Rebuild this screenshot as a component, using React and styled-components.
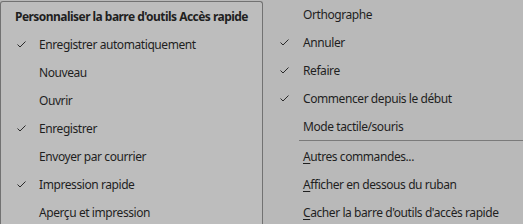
import React from "react";
import styled, { createGlobalStyle } from "styled-components";

const Global = createGlobalStyle`
  html, body { margin: 0; padding: 0; background: #b9b9b9; }
  body { font-family: "Noto Sans", "Liberation Sans", sans-serif; }
`;

const Screen = styled.div`
  width: 523px;
  height: 224px;
  overflow: hidden;
  display: grid;
  grid-template-columns: 263px 1fr;
  background: #b9b9b9;
  color: #1f1f1f;
  font-size: 12px;
`;

const Panel = styled.div`
  margin-top: 1px;
  height: 240px;
  box-sizing: border-box;
  background: #bdbdbd;
  border: 1px solid #727272;
  border-bottom: none;
  border-radius: 3px 3px 0 0;
  display: flex;
  flex-direction: column;
`;

const Header = styled.div`
  height: 28px;
  display: flex;
  align-items: center;
  padding-left: 14px;
  font-weight: 700;
  letter-spacing: -0.54px;
  white-space: nowrap;
`;

const Column = styled.div`
  display: flex;
  flex-direction: column;
`;

const Row = styled.div`
  height: 28px;
  display: flex;
  align-items: center;
  padding-left: ${(p) => p.$indent}px;
  white-space: nowrap;
`;

const Check = styled.span`
  width: ${(p) => p.$w}px;
  flex: none;
  display: flex;
  align-items: center;
`;

const Label = styled.span`
  letter-spacing: -0.42px;
`;

const Sep = styled.div`
  height: 1px;
  background: #7a7a7a;
  margin: 0 0 1px 36px;
`;

const Key = styled.span`
  text-decoration: underline;
  text-underline-offset: 2px;
`;

const Tick = () => (
  <svg width="9" height="7" viewBox="0 0 9 7">
    <polyline points="0.5,3.5 3,6 8.5,0.5" fill="none" stroke="#2a2a2a" strokeWidth="1" />
  </svg>
);

const Item = ({ checked, indent, checkW, children }) => (
  <Row $indent={indent}>
    <Check $w={checkW}>{checked ? <Tick /> : null}</Check>
    <Label>{children}</Label>
  </Row>
);

const left = [
  ["Enregistrer automatiquement", true],
  ["Nouveau", false],
  ["Ouvrir", false],
  ["Enregistrer", true],
  ["Envoyer par courrier", false],
  ["Impression rapide", true],
  ["Aperçu et impression", false],
];

const right = [
  ["Orthographe", false],
  ["Annuler", true],
  ["Refaire", true],
  ["Commencer depuis le début", true],
  ["Mode tactile/souris", false],
];

export default function App() {
  return (
    <>
      <Global />
      <Screen>
        <Panel>
          <Header>Personnaliser la barre d'outils Accès rapide</Header>
          {left.map(([t, c]) => (
            <Item key={t} checked={c} indent={16} checkW={22}>{t}</Item>
          ))}
        </Panel>
        <Column>
          {right.map(([t, c]) => (
            <Item key={t} checked={c} indent={17} checkW={23}>{t}</Item>
          ))}
          <Sep />
          <Item indent={17} checkW={23}><Key>A</Key>utres commandes...</Item>
          <Item indent={17} checkW={23}><Key>A</Key>fficher en dessous du ruban</Item>
          <Item indent={17} checkW={23}><Key>C</Key>acher la barre d'outils d'accès rapide</Item>
        </Column>
      </Screen>
    </>
  );
}
